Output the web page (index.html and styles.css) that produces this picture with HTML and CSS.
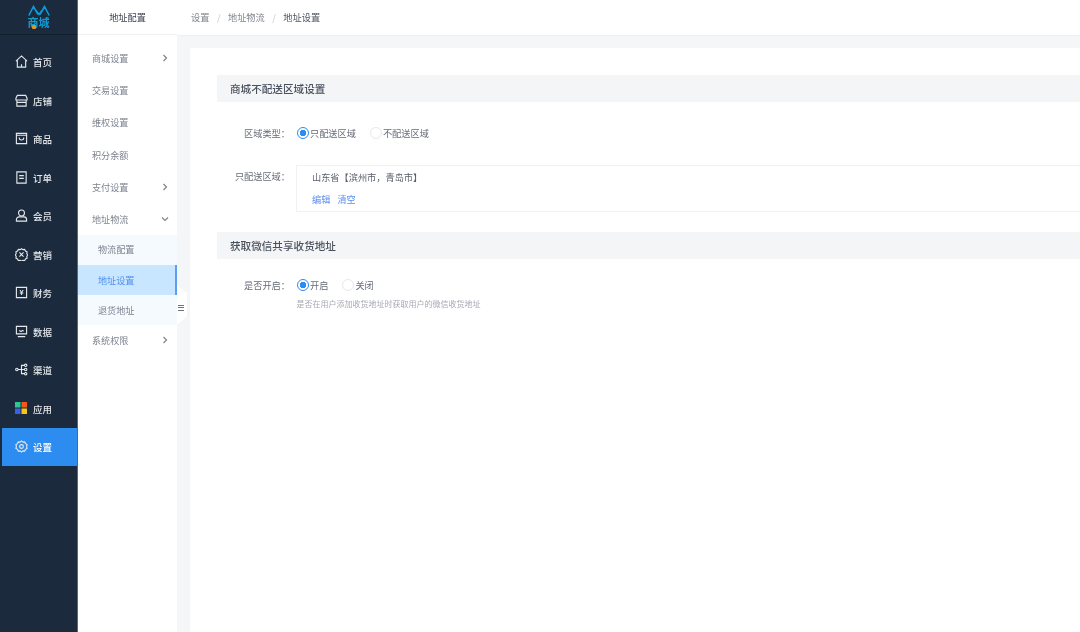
FILE: index.html
```html
<!DOCTYPE html>
<html lang="zh">
<head>
<meta charset="utf-8">
<title>地址设置</title>
<link rel="stylesheet" href="styles.css">
</head>
<body>
<div class="app">
  <aside class="rail">
    <div class="logo">
      <svg class="logo-mark" viewBox="0 0 22 11" width="22" height="11"><path d="M.8 10.500 5.500 1.500 10 9.500M12 9.500 16.500 1.500 21.200 10.500M8 5.500 11 9.500 14 5.500" fill="none" stroke="#0d9ad8" stroke-width="1.600"/></svg>
      <span class="logo-text"><span class="logo-accent">商</span>城</span>
    </div>
    <nav class="rail-nav">
      <a class="rail-item"><svg class="ico" viewBox="0 0 14 14"><path d="M1 6.500 7 1l6 5.500M2.500 5.500V13h9V5.500M7 10v3"/></svg><span>首页</span></a>
      <a class="rail-item"><svg class="ico" viewBox="0 0 14 14"><path d="M2.500 1.500h9l1.500 3v2H1v-2zM2 6.500V13h10V6.500M2 9h10"/></svg><span>店铺</span></a>
      <a class="rail-item"><svg class="ico" viewBox="0 0 14 14"><path d="M1.500 1.500h11v11h-11zM1.500 3.500h11M4.500 6c0 3.500 5 3.500 5 0"/></svg><span>商品</span></a>
      <a class="rail-item"><svg class="ico" viewBox="0 0 14 14"><path d="M2 1h10v12H2zM4.500 5h5M4.500 8h5"/></svg><span>订单</span></a>
      <a class="rail-item"><svg class="ico" viewBox="0 0 14 14"><circle cx="7" cy="4.300" r="3.200"/><path d="M1.500 13v-1.500c0-2 1.500-3 3-3h5c1.500 0 3 1 3 3V13z"/></svg><span>会员</span></a>
      <a class="rail-item"><svg class="ico" viewBox="0 0 14 14"><path d="M7 .8l1.500 1 1.900-.3.900 1.700 1.700.9-.3 1.900 1 1.500-1 1.500.3 1.900-1.700.9-.9 1.700-1.900-.3-1.500 1-1.500-1-1.900.3-.9-1.700-1.700-.9.3-1.900-1-1.500 1-1.500-.3-1.900 1.700-.9.9-1.700 1.900.3z"/><path d="M4.800 4.800l4.400 4.400M9.200 4.800 4.800 9.200"/></svg><span>营销</span></a>
      <a class="rail-item"><svg class="ico" viewBox="0 0 14 14"><path d="M1.500 1.500h11v11h-11z"/><text class="ico-yen" x="7" y="10">¥</text></svg><span>财务</span></a>
      <a class="rail-item"><svg class="ico" viewBox="0 0 14 14"><path d="M1.500 1.500h11v8h-11zM3 12.500h8M4.500 6l2 1 1.500-1 1.500 .5"/></svg><span>数据</span></a>
      <a class="rail-item"><svg class="ico" viewBox="0 0 14 14"><circle cx="2" cy="7" r="1.300"/><circle cx="11.500" cy="2.500" r="1.300"/><circle cx="11.500" cy="7" r="1.300"/><circle cx="11.500" cy="11.500" r="1.300"/><path d="M3.300 7h7M7 7V2.500h3.200M7 7v4.500h3.200"/></svg><span>渠道</span></a>
      <a class="rail-item"><svg class="ico-apps" viewBox="0 0 12 12"><rect width="5.500" height="5.500" fill="#2fc68f"/><rect x="6.500" width="5.500" height="5.500" fill="#ef5a1c"/><rect y="6.500" width="5.500" height="5.500" fill="#3d5fe0"/><rect x="6.500" y="6.500" width="5.500" height="5.500" fill="#f5c518"/></svg><span>应用</span></a>
      <a class="rail-item is-active"><svg class="ico" viewBox="0 0 14 14"><path d="M7 1l1.500 1.300 2-.2.800 1.900 1.700 1L12.500 7l.5 2-1.700 1-.8 1.900-2-.2L7 13l-1.500-1.300-2 .2-.8-1.900L1 9l.5-2L1 5l1.700-1 .8-1.900 2 .2z"/><circle cx="7" cy="7" r="2"/></svg><span>设置</span></a>
    </nav>
  </aside>

  <aside class="submenu">
    <div class="submenu-title">地址配置</div>
    <ul class="menu">
      <li class="menu-item"><span>商城设置</span><svg class="chev" viewBox="0 0 6 8"><path d="M1.500 1 4.500 4 1.500 7"/></svg></li>
      <li class="menu-item"><span>交易设置</span></li>
      <li class="menu-item"><span>维权设置</span></li>
      <li class="menu-item"><span>积分余额</span></li>
      <li class="menu-item"><span>支付设置</span><svg class="chev" viewBox="0 0 6 8"><path d="M1.500 1 4.500 4 1.500 7"/></svg></li>
      <li class="menu-item menu-open"><span>地址物流</span><svg class="chev chev-down" viewBox="0 0 8 6"><path d="M1 1.500 4 4.500 7 1.500"/></svg></li>
      <li class="menu-sub menu-sub-first">物流配置</li>
      <li class="menu-sub is-current">地址设置</li>
      <li class="menu-sub menu-sub-last">退货地址</li>
      <li class="menu-item menu-last"><span>系统权限</span><svg class="chev" viewBox="0 0 6 8"><path d="M1.500 1 4.500 4 1.500 7"/></svg></li>
    </ul>
  </aside>

  <main class="main">
    <header class="crumbs">
      <span>设置</span><i>/</i><span>地址物流</span><i>/</i><b>地址设置</b>
    </header>
    <div class="stage">
      <div class="collapse"><span class="collapse-bars"></span></div>
      <section class="card">
        <h2 class="section-title">商城不配送区域设置</h2>
        <div class="row row-type">
          <label class="row-label">区域类型：</label>
          <div class="radios">
            <span class="radio is-on">只配送区域</span>
            <span class="radio">不配送区域</span>
          </div>
        </div>
        <div class="row row-area">
          <label class="row-label">只配送区域：</label>
          <div class="area-box">
            <p class="area-text">山东省【滨州市，青岛市】</p>
            <p class="area-links"><a>编辑</a><a>清空</a></p>
          </div>
        </div>
        <h2 class="section-title">获取微信共享收货地址</h2>
        <div class="row row-open">
          <label class="row-label">是否开启：</label>
          <div class="radios">
            <span class="radio is-on">开启</span>
            <span class="radio">关闭</span>
          </div>
        </div>
        <p class="hint">是否在用户添加收货地址时获取用户的微信收货地址</p>
      </section>
    </div>
  </main>
</div>
</body>
</html>
```
FILE: styles.css
```css
* { box-sizing: border-box; }
html, body { margin: 0; padding: 0; height: 100%; overflow: hidden; }
body { font-family: "Noto Sans CJK SC", "Liberation Sans", sans-serif; color: #515a6e; background: #f5f6f8; }
h2, p, ul { margin: 0; padding: 0; }
ul { list-style: none; }

.app { display: flex; width: 1080px; height: 632px; filter: blur(.35px); }

/* rail */
.rail { width: 78px; flex: none; background: #1b2a3c; display: flex; flex-direction: column; border-right: 1px solid #5d6875; }
.logo { height: 35px; flex: none; border-bottom: 1px solid #141f2d; display: flex; flex-direction: column; align-items: center; padding-top: 5px; }
.logo-mark { display: block; }
.logo-text { margin-top: 1px; font-size: 11px; line-height: 11px; font-weight: 700; color: #0d9ad8; }
.logo-accent { color: #0f9fc9; position: relative; }
.logo-accent::after { content: ""; position: absolute; left: 4px; bottom: 1px; width: 4px; height: 4px; background: #d9972b; border-radius: 1px; }
.rail-nav { padding-top: 7.500px; display: flex; flex-direction: column; }
.rail-item { height: 38.500px; margin-left: 2px; padding-left: 13px; display: flex; align-items: center; gap: 5px; color: #e3e6ea; font-size: 9.500px; font-weight: 500; }
.rail-item span { padding-top: 1px; }
.ico { width: 13px; height: 13px; flex: none; fill: none; stroke: #e6e9ec; stroke-width: 1.200; }
.ico-yen { font-family: "Liberation Sans", sans-serif; font-size: 8px; font-weight: 700; fill: #e6e9ec; stroke: none; text-anchor: middle; }
.ico-apps { width: 12px; height: 12px; flex: none; margin-right: 1px; }
.is-active { background: #2d8cf0; color: #fff; }

/* submenu */
.submenu { width: 99px; flex: none; background: #fff; }
.submenu-title { height: 35px; border-bottom: 1px solid #f0f1f4; display: flex; align-items: center; justify-content: center; font-size: 9.200px; color: #3a4250; padding-bottom: 1px; }
.menu { padding-top: 6.500px; font-size: 9.100px; color: #7d838f; }
.menu-item { height: 32.400px; padding: 0 9px 0 14px; display: flex; align-items: center; justify-content: space-between; }
.menu-open { height: 32px; }
.menu-last { height: 31px; padding-bottom: 1px; }
.chev { width: 6px; height: 8px; fill: none; stroke: #7d838f; stroke-width: 1.200; }
.chev-down { width: 8px; height: 6px; margin-right: -1px; }
.menu-sub { height: 30px; padding-left: 20px; display: flex; align-items: center; background: #f5fafe; }
.menu-sub-first { padding-bottom: 2px; }
.menu-sub-last { padding-bottom: 1px; }
.is-current { background: #c8e6ff; color: #4f8fee; border-right: 2px solid #5c9ff2; padding-bottom: 1px; }

/* main */
.main { flex: 1; min-width: 0; display: flex; flex-direction: column; }
.crumbs { height: 36px; flex: none; background: #fff; border-bottom: 1px solid #eef0f3; padding: 0 0 2px 14px; display: flex; align-items: center; font-size: 9.200px; color: #80868f; }
.crumbs i { font-style: normal; color: #c5c8ce; margin: 0 7.500px; }
.crumbs b { font-weight: 400; color: #4d5562; }

.stage { flex: 1; position: relative; padding: 12px 0 0 13px; }
.collapse { position: absolute; left: 0; top: 249px; width: 10px; height: 40px; background: #fff; clip-path: polygon(0 0, 100% 22%, 100% 78%, 0 100%); display: flex; align-items: center; justify-content: flex-start; padding-left: 1px; }
.collapse-bars { width: 6px; height: 6px; border-top: 1px solid #6d7380; border-bottom: 1px solid #6d7380; background: linear-gradient(#6d7380, #6d7380) center / 100% 1px no-repeat; margin-top: 5px; }

.card { height: 100%; background: #fff; padding: 27px 0 0 27px; }
.section-title { height: 27px; padding-left: 13px; background: #f4f5f6; font-size: 10.600px; font-weight: 500; line-height: 27px; color: #4a5260; }

.row { display: flex; font-size: 9.200px; color: #666c78; }
.row-label { width: 73px; flex: none; text-align: right; white-space: nowrap; }
.row-type { margin-top: 24px; height: 14px; align-items: center; }
.row-area { margin-top: 25px; margin-bottom: 20px; height: 47px; }
.row-area .row-label { padding-top: 4px; line-height: 14px; }
.row-open { margin-top: 19px; height: 14px; align-items: center; }

.radios { margin-left: 7px; display: flex; gap: 14px; }
.radio { display: flex; align-items: center; gap: 1px; line-height: 14px; }
.radio::before { content: ""; width: 10px; height: 10px; margin-right: 0; border-radius: 50%; border: 1px solid #e6e8eb; background: #fff; flex: none; }
.radio.is-on::before { border-color: #2d8cf0; background: radial-gradient(circle, #2d8cf0 0 3px, #fff 3.500px); }

.area-box { flex: 1; margin-left: 6px; border: 1px solid #f0f1f3; border-right: 0; padding: 4px 0 0 15px; }
.area-text { line-height: 14px; color: #59606c; }
.area-links { margin-top: 8px; line-height: 14px; display: flex; gap: 7px; color: #5c8ff0; }

.hint { margin: 6px 0 0 79.500px; font-size: 8px; line-height: 12px; color: #a5aab2; }
```
